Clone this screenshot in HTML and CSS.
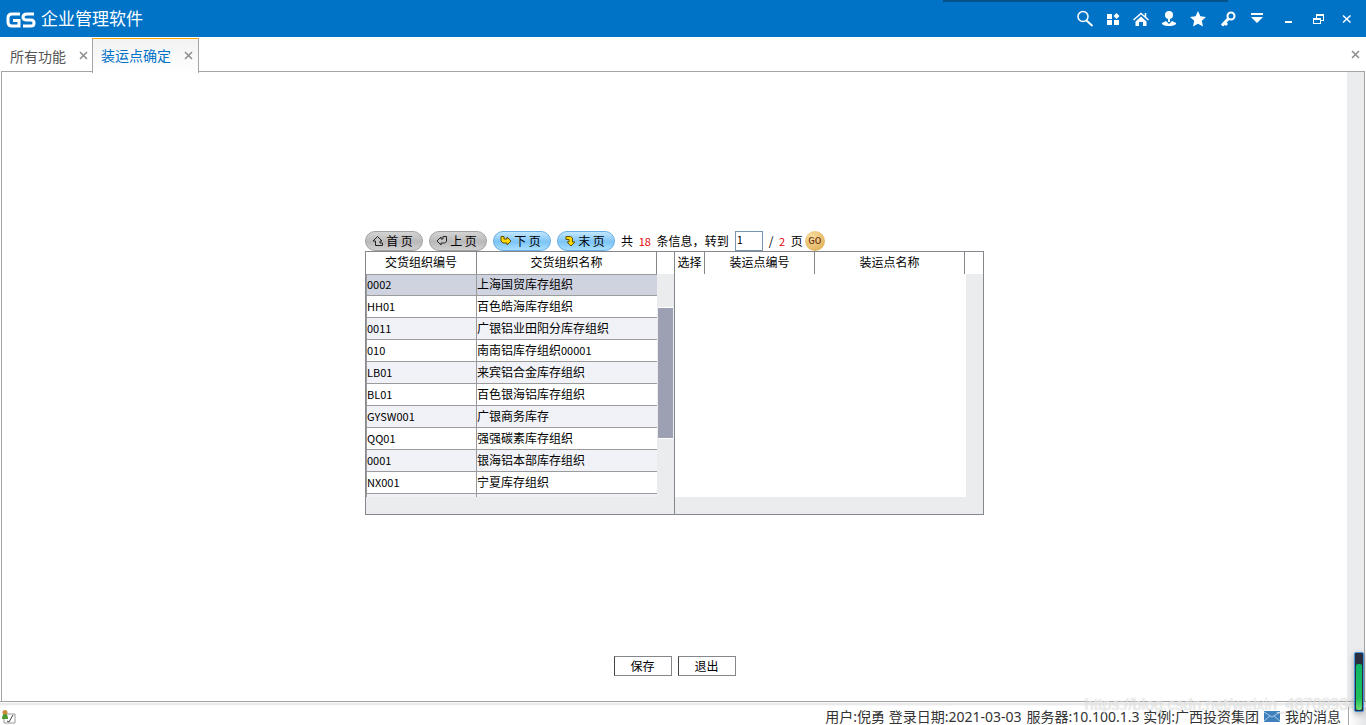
FILE: index.html
```html
<!DOCTYPE html>
<html lang="zh-CN">
<head>
<meta charset="utf-8">
<title>GS 企业管理软件</title>
<link rel="stylesheet" href="styles.css">
</head>
<body>
<header class="titlebar">
  <svg class="logo" viewBox="0 0 30 18" role="img" aria-label="GS">
    <path d="M14 3H6Q2 3 2 7v4q0 4 4 4h7V9.500H7M28 3h-7q-4 0-4 3t4 3h4q3 0 3 3T25 15h-8"/>
  </svg>
  <h1 class="brand">企业管理软件</h1>
  <nav class="tools" aria-label="工具">
    <button class="tool" aria-label="搜索"><svg viewBox="0 0 18 18"><circle cx="7" cy="6.500" r="5" class="line slim"/><path class="line" d="M10.500 10.500l6 5.500"/></svg></button>
    <button class="tool" aria-label="应用"><svg viewBox="0 0 18 18"><path d="M3 4h5v5H3zM3 10h5v5H3zM10 10h5v5h-5zM12.500 3L15.500 6l-3 3L9.500 6z"/></svg></button>
    <button class="tool" aria-label="主页"><svg viewBox="0 0 18 18"><path d="M9 6.500l5.500 5V16H11v-4H7v4H3.500v-4.500z"/><path class="line slim" d="M1.500 10L9 3.500l7.500 6.500M13.500 3v4"/></svg></button>
    <button class="tool" aria-label="用户"><svg viewBox="0 0 18 18"><circle cx="9" cy="5" r="4"/><path d="M8 8h2v4H8zM2 13l4-2 3 3 3-3 4 2v1q-2 2-7 2t-7-2z"/></svg></button>
    <button class="tool wide" aria-label="收藏"><svg viewBox="0 0 18 18"><path d="M9 1l2.400 5.300 5.600.6-4.200 3.900 1.200 5.700L9 13.700l-5 2.800 1.200-5.700L1 6.900l5.600-.6z"/></svg></button>
    <button class="tool wide" aria-label="密码"><svg viewBox="0 0 18 18"><circle cx="12" cy="6" r="3.500" class="line"/><path class="line thick" d="M9.500 8.500L3 15.500M5.500 12.500l2.500 2.500"/></svg></button>
    <button class="tool" aria-label="更多"><svg viewBox="0 0 18 18"><path d="M3 3h12v2H3zM3 7h12l-6 6z"/></svg></button>
    <button class="tool win first" aria-label="最小化"><svg viewBox="0 0 18 18"><path d="M5 11h7v2H5z"/></svg></button>
    <button class="tool win" aria-label="还原"><svg viewBox="0 0 18 18" class="crisp"><path class="thin" d="M7.500 8V5.500h7v5H12M4.500 9h7v4.500h-7zM4 8.500h8M7 4.500h8"/></svg></button>
    <button class="tool win" aria-label="关闭"><svg viewBox="0 0 18 18"><path class="line slim" d="M5 5.500l7.500 7M12.500 5.500l-7.500 7"/></svg></button>
  </nav>
</header>
<div class="tabs">
  <div class="tab"><a class="tab-name" href="#">所有功能</a><button class="close" aria-label="关闭所有功能"><svg viewBox="0 0 9 9"><path d="M1 1l7 7M8 1L1 8"/></svg></button></div>
  <div class="tab active"><a class="tab-name" href="#">装运点确定</a><button class="close" aria-label="关闭装运点确定"><svg viewBox="0 0 9 9"><path d="M1 1l7 7M8 1L1 8"/></svg></button></div>
  <button class="close close-all" aria-label="关闭全部"><svg viewBox="0 0 9 9"><path d="M1 1l7 7M8 1L1 8"/></svg></button>
</div>
<main class="content">
  <div class="page">
    <section class="picker">
      <div class="pager">
        <button class="pill"><svg viewBox="0 0 12 12"><path d="M5.500 1.500L10 6H8v2h2.500v2.500h-7V6H1z"/></svg>首 页</button>
        <button class="pill"><svg viewBox="0 0 12 12"><path d="M1 6l4-4v2h2V1.500h3.500v5L8.500 8H5v2z"/></svg>上 页</button>
        <button class="pill blue"><svg viewBox="0 0 12 12"><path d="M1 1.500h3V4h3V2l4 4-4 4V8H3L1 6z"/></svg>下 页</button>
        <button class="pill blue"><svg viewBox="0 0 12 12"><path d="M2 1.500h4.500L8.500 3v4h2.500L7 11 3 7h2V4.500H2z"/></svg>末 页</button>
        <span class="info">共 <span class="red">18</span> 条信息，<label for="goto">转到</label></span>
        <input class="goto" id="goto" type="text" value="1">
        <span class="info">/ <span class="red">2</span> 页</span>
        <button class="go">GO</button>
      </div>
      <div class="grids">
        <div class="panel">
          <div class="view">
            <table class="left">
              <colgroup><col class="c-code"><col></colgroup>
              <thead><tr><th>交货组织编号</th><th>交货组织名称</th></tr></thead>
              <tbody>
                <tr class="selected"><td>0002</td><td>上海国贸库存组织</td></tr>
                <tr><td>HH01</td><td>百色皓海库存组织</td></tr>
                <tr><td>0011</td><td>广银铝业田阳分库存组织</td></tr>
                <tr><td>010</td><td>南南铝库存组织<span class="num">00001</span></td></tr>
                <tr><td>LB01</td><td>来宾铝合金库存组织</td></tr>
                <tr><td>BL01</td><td>百色银海铝库存组织</td></tr>
                <tr><td>GYSW001</td><td>广银商务库存</td></tr>
                <tr><td>QQ01</td><td>强强碳素库存组织</td></tr>
                <tr><td>0001</td><td>银海铝本部库存组织</td></tr>
                <tr><td>NX001</td><td>宁夏库存组织</td></tr>
                <tr><td></td><td></td></tr>
              </tbody>
            </table>
          </div>
          <div class="vbar"><div class="thumb"></div></div>
          <div class="hbar"></div>
        </div>
        <div class="panel">
          <div class="view">
            <table class="right">
              <colgroup><col class="c-pick"><col class="c-no"><col></colgroup>
              <thead><tr><th>选择</th><th>装运点编号</th><th>装运点名称</th></tr></thead>
            </table>
          </div>
          <div class="vbar"></div>
          <div class="hbar"></div>
        </div>
      </div>
    </section>
    <div class="actions">
      <button class="plain">保存</button>
      <button class="plain">退出</button>
    </div>
  </div>
  <div class="page-scroll"></div>
</main>
<footer class="status">
  <svg class="person" viewBox="0 0 16 16"><path d="M4 5h11v9H4z" fill="#fff" stroke="#999"/><circle cx="5" cy="3.500" r="2.500" fill="#c98b3c"/><path d="M2 10q0-5 3-5t3 5z" fill="#4b9b32"/><path d="M7 12l2 1 4-7" fill="none" stroke="#444"/></svg>
  <div class="status-text">
    <span>用户:倪勇 登录日期:2021-03-03</span>
    <span class="server">服务器:10.100.1.3 实例:广西投资集团</span>
    <svg class="mail" viewBox="0 0 16 11"><path d="M0 0h16v11H0z" fill="#3f81bd"/><path d="M0 1l8 5 8-5M0 10l6-5M16 10l-6-5" fill="none" stroke="#a9cbe6"/></svg>
    <a class="messages" href="#">我的消息</a>
  </div>
  <div class="corner"></div>
</footer>
<div class="watermark">https://blog.csdn.net/weixin_48708934</div>
<div class="gauge"><div class="gauge-fill"></div></div>
<div class="top-shade"></div>
</body>
</html>
```
FILE: styles.css
```css
* { box-sizing: border-box; }
body {
  margin: 0;
  height: 100vh;
  display: flex;
  flex-direction: column;
  overflow: hidden;
  background: #fff;
  color: #000;
  font: 12px/16px "Noto Sans CJK SC", sans-serif;
}
button { font: inherit; color: inherit; border: 0; background: none; padding: 0; }
a { color: inherit; text-decoration: none; }
svg { display: block; }

.titlebar {
  height: 37px;
  flex: none;
  display: flex;
  align-items: center;
  padding: 0 5px 0 6px;
  background: #0173c7;
  color: #fff;
}
.logo { width: 30px; height: 18px; margin-top: 2px; fill: none; stroke: #fff; stroke-width: 3; }
.brand { margin: 0 auto 2px 5px; font-size: 17px; line-height: 24px; font-weight: 400; }
.tools { display: flex; }
.tool { width: 28px; display: flex; justify-content: center; }
.tool svg { width: 18px; height: 18px; fill: #fff; }
.tool .line { fill: none; stroke: #fff; stroke-width: 2; }
.tool .slim { stroke-width: 1.5; }
.tool .thick { stroke-width: 3; }
.tool .thin { fill: none; stroke: #fff; stroke-width: 1; }
.crisp { shape-rendering: crispEdges; }
.wide { width: 30px; }
.win { width: 29px; }
.first { margin-left: 3px; }

.tabs { height: 34px; flex: none; display: flex; align-items: center; padding: 1px 6px 0 2px; }
.tab {
  height: 33px;
  display: flex;
  align-items: center;
  gap: 13px;
  padding: 2px 4px 0 8px;
  color: #555;
  font-size: 14px;
  line-height: 20px;
}
.active {
  height: 35px;
  margin-bottom: -2px;
  position: relative;
  padding: 0 5px 2px 8px;
  border: 1px solid #a5a5a5;
  border-top-color: #f5a50a;
  border-bottom: 0;
  background: linear-gradient(#f2f2f2, #fff);
  color: #0173c7;
}
.close { width: 9px; height: 9px; }
.close svg { width: 9px; height: 9px; stroke: #8c8c8c; stroke-width: 1.5; }
.close-all { margin-left: auto; }

.content {
  flex: 1;
  min-height: 0;
  display: flex;
  margin: 0 1px;
  border: 1px solid #a5a5a5;
}
.page { flex: 1; display: flex; flex-direction: column; align-items: center; padding-top: 158px; }
.page-scroll { width: 17px; background: #ebecee; }

.picker { width: 619px; }
.pager { display: flex; align-items: center; gap: 6px; height: 21px; }
.pill {
  width: 58px;
  height: 20px;
  display: flex;
  align-items: center;
  justify-content: center;
  gap: 2px;
  padding-right: 3px;
  border: 1px solid #a2a2a2;
  border-radius: 10px;
  background: linear-gradient(#d4d4d4, #b9b9b9 55%, #d0d0d0);
  white-space: pre;
}
.pill svg { width: 12px; height: 12px; fill: #c4c4c4; stroke: #222; }
.blue { border-color: #6badde; background: linear-gradient(#c2e7ff, #7cc4f6 55%, #a8e0ff); }
.pill.blue svg { fill: #ffd800; stroke: #665000; }
.info { white-space: pre; word-break: keep-all; }
.red { color: #e60000; margin: 0 3px; font-size: 11px; }
.goto {
  width: 28px;
  height: 20px;
  padding: 0 1px 3px;
  border: 1px solid #7796b4;
  font: 11px/16px "Noto Sans CJK SC", sans-serif;
}
.go {
  width: 20px;
  height: 20px;
  margin-left: -4px;
  border-radius: 50%;
  background: radial-gradient(circle at 35% 30%, #f7dea0, #dba747);
  color: #6b2c10;
  font: 11px/20px "Liberation Mono", monospace;
}

.grids { display: flex; border: 1px solid #84888c; }
.panel { flex: 1; display: grid; grid-template: 245px 17px / 1fr 17px; }
.panel + .panel { border-left: 1px solid #84888c; }
.view { overflow: hidden; }
table { width: 100%; table-layout: fixed; border-collapse: separate; border-spacing: 0; }
.c-code { width: 111px; }
.c-pick { width: 30px; }
.c-no { width: 110px; }
th, td { height: 22px; padding: 0 1px; border-right: 1px solid #9b9b9b; white-space: nowrap; }
th { padding-bottom: 2px; font-weight: 400; border-color: #84888c; }
.right { width: 290px; }
td { border-bottom: 1px solid #9b9b9b; text-align: left; padding: 0 0 2px; }
td:last-child { border-right: 0; }
td:first-child { font-size: 11px; border-left: 1px solid #9b9b9b; }
.selected td { border-top: 1px solid #9b9b9b; }
.num { font-size: 11px; }
tbody tr:nth-child(odd) { background: #f1f2f7; }
tbody .selected:nth-child(odd) { background: #cfd3e0; }
.vbar { margin-top: 22px; padding: 33px 1px 0; background: #ebecee; }
.thumb { height: 132px; background: #9ca0b2; border: 1px solid #fff; border-width: 1px 0; }
.hbar { grid-column: 1 / -1; background: #ebecee; }

.actions { display: flex; gap: 6px; margin-top: 141px; }
.plain { width: 58px; height: 20px; border: 1px solid #84888c; border-left-color: #444; background: #fff; }

.status {
  height: 24px;
  flex: none;
  display: flex;
  align-items: center;
  margin-top: -1px;
  padding-top: 7px;
  color: #333;
  font: 14px/18px "Noto Sans", "Noto Sans CJK SC", sans-serif;
  background: linear-gradient(#a5a5a5 1px, #fff 1px, #e4e4e4 3px, #fff 5px);
}
.person { width: 16px; height: 16px; }
.status-text { margin-left: auto; display: flex; align-items: center; gap: 5px; padding-right: 7px; white-space: nowrap; }
.mail { width: 16px; height: 11px; }
.corner { width: 18px; height: 20px; border-left: 1px solid #a5a5a5; background: linear-gradient(90deg, #fff, #e4e5e7); }

.watermark {
  position: absolute;
  right: 9px;
  bottom: 10px;
  color: rgba(255, 255, 255, .65);
  text-shadow: 0 0 1px rgba(120, 120, 120, .45);
  font: 16px/20px "Liberation Sans", sans-serif;
  pointer-events: none;
}
.gauge {
  position: absolute;
  right: 2px;
  bottom: 13px;
  width: 10px;
  height: 60px;
  padding: 11px 1px 1px;
  border: 1px solid #4293df;
  border-radius: 2px;
  background: #292d3d;
  box-shadow: 0 2px 6px rgba(0, 0, 0, .3);
}
.gauge-fill { height: 100%; border-radius: 2px; background: linear-gradient(#0cb568, #20bf59 75%, #70dc74); }
.top-shade { position: absolute; top: 0; right: 138px; width: 285px; height: 2px; background: #07518b; }
```
